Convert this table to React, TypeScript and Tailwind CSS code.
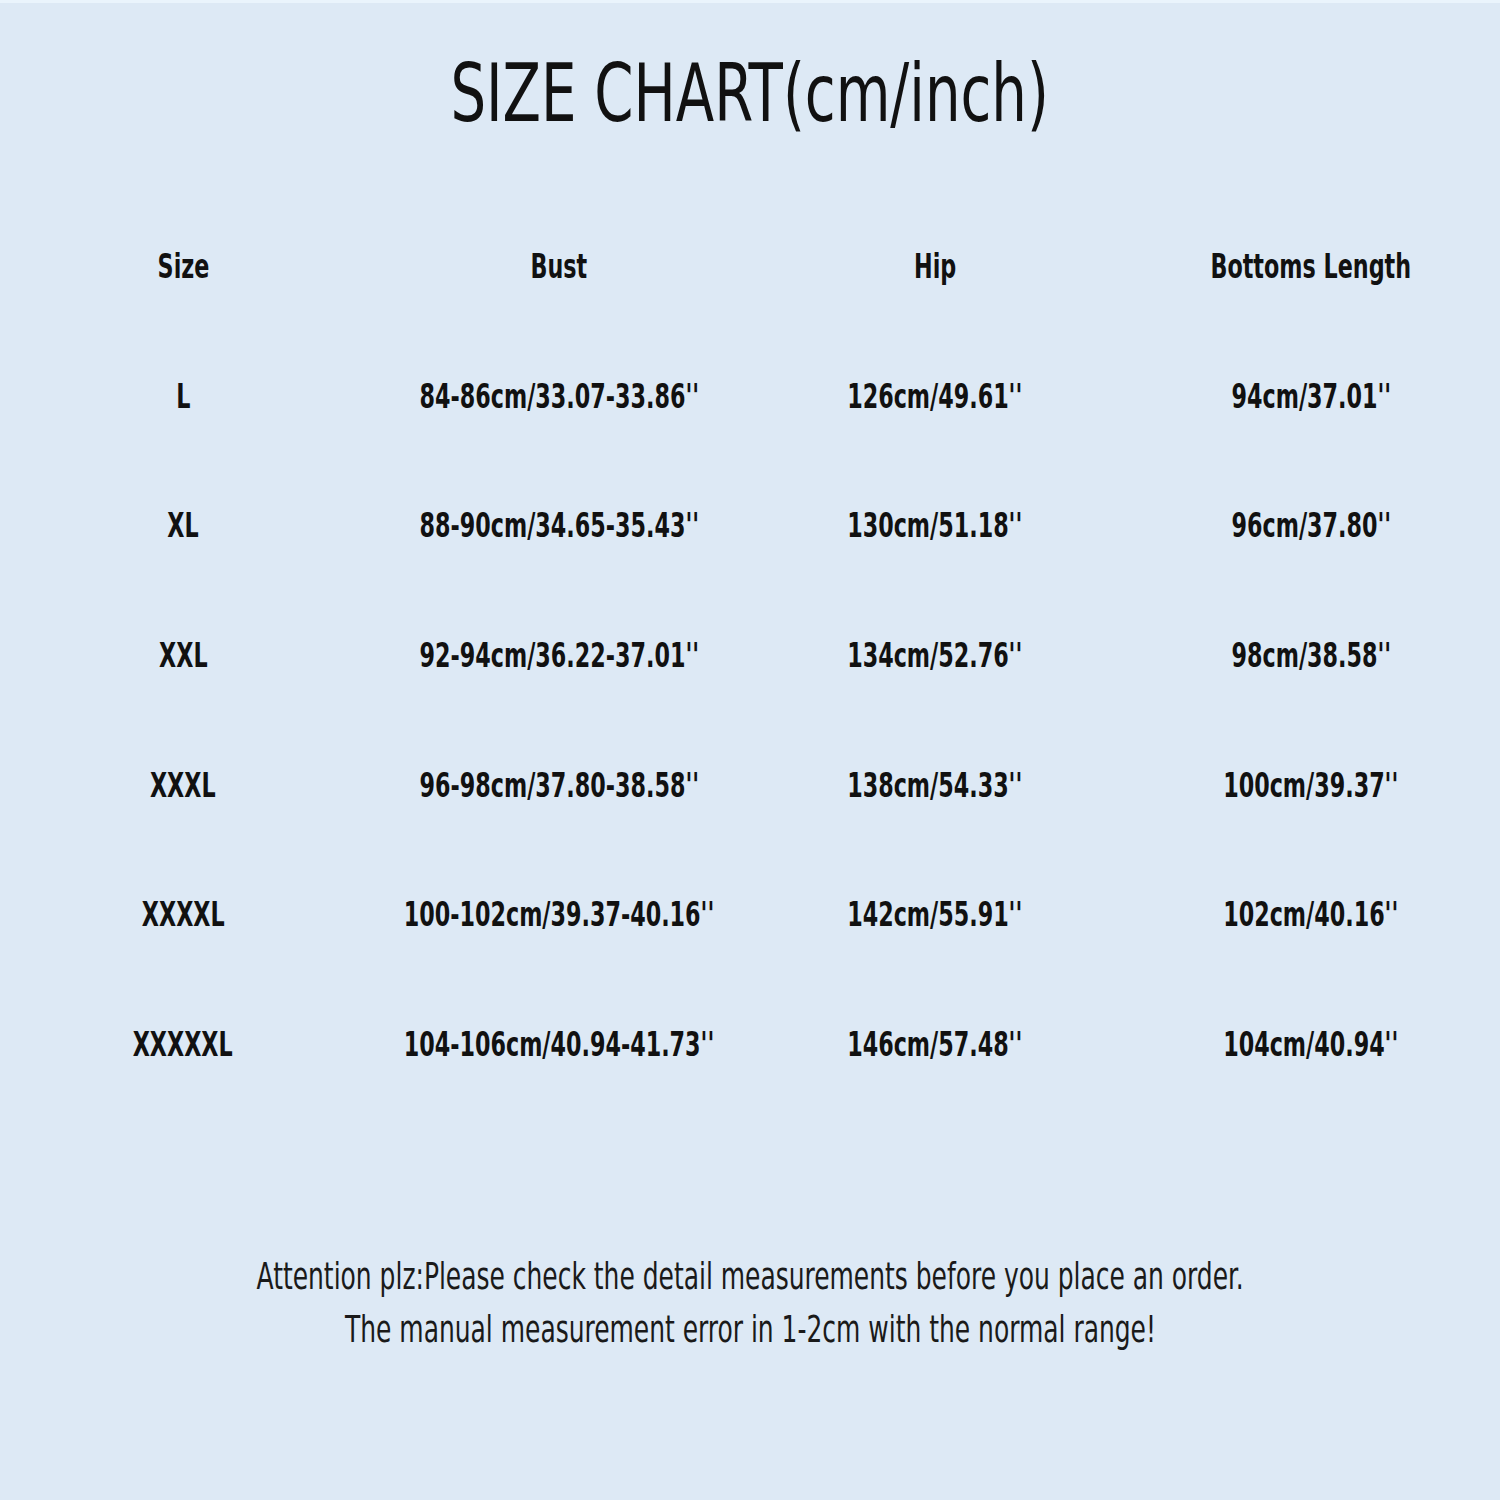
const rows = [
  { size: "L", bust: "84-86cm/33.07-33.86''", hip: "126cm/49.61''", length: "94cm/37.01''" },
  { size: "XL", bust: "88-90cm/34.65-35.43''", hip: "130cm/51.18''", length: "96cm/37.80''" },
  { size: "XXL", bust: "92-94cm/36.22-37.01''", hip: "134cm/52.76''", length: "98cm/38.58''" },
  { size: "XXXL", bust: "96-98cm/37.80-38.58''", hip: "138cm/54.33''", length: "100cm/39.37''" },
  { size: "XXXXL", bust: "100-102cm/39.37-40.16''", hip: "142cm/55.91''", length: "102cm/40.16''" },
  { size: "XXXXXL", bust: "104-106cm/40.94-41.73''", hip: "146cm/57.48''", length: "104cm/40.94''" },
];

const narrow = { fontFamily: '"Liberation Sans Narrow", "DejaVu Sans Condensed", "Liberation Sans", sans-serif' };

function Cell({ children }: { children: string }) {
  return (
    <div className="flex h-[129.6px] items-center justify-center">
      <span className="inline-block scale-x-[0.75] whitespace-nowrap text-[33px] font-bold leading-none text-[#111]">
        {children}
      </span>
    </div>
  );
}

export default function App() {
  return (
    <div className="h-[1500px] w-[1500px] overflow-hidden border-t-[3px] border-[#eaf4fc] bg-[#dde9f5]" style={narrow}>
      {/* Title */}
      <div className="flex justify-center pt-[51px]">
        <h1 className="inline-block scale-x-[0.78] whitespace-nowrap text-[80px] font-normal leading-none text-[#111]">
          SIZE CHART(cm/inch)
        </h1>
      </div>

      {/* Table */}
      <div className="ml-[-5px] mt-[68px] grid w-[1504px] grid-cols-4">
        <Cell>Size</Cell>
        <Cell>Bust</Cell>
        <Cell>Hip</Cell>
        <Cell>Bottoms Length</Cell>
        {rows.map((r) => (
          <div key={r.size} className="contents">
            <Cell>{r.size}</Cell>
            <Cell>{r.bust}</Cell>
            <Cell>{r.hip}</Cell>
            <Cell>{r.length}</Cell>
          </div>
        ))}
      </div>

      {/* Footer note */}
      <div className="mt-[141px] flex flex-col items-center text-[38px] leading-[53px] text-[#1a1a1a]">
        <p className="inline-block scale-x-[0.73] whitespace-nowrap">
          Attention plz:Please check the detail measurements before you place an order.
        </p>
        <p className="inline-block scale-x-[0.73] whitespace-nowrap">
          The manual measurement error in 1-2cm with the normal range!
        </p>
      </div>
    </div>
  );
}
